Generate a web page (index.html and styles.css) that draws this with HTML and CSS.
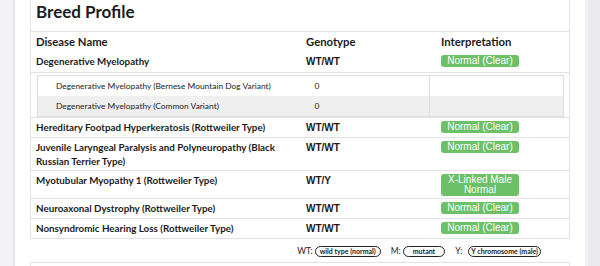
FILE: index.html
```html
<!DOCTYPE html>
<html lang="en">
<head>
    <meta charset="UTF-8" />
    <meta name="viewport" content="width=device-width, initial-scale=1" />
    <title>Breed Profile</title>
    <link rel="stylesheet" href="styles.css">
</head>
<body>
    <div class="rail rail-left"></div>

    <main class="page">
        <section class="card">
            <h1>Breed Profile</h1>
            <table class="results">
                <thead>
                    <tr>
                        <th class="col-name">Disease Name</th>
                        <th class="col-geno">Genotype</th>
                        <th class="col-interp">Interpretation</th>
                    </tr>
                </thead>
                <tbody>
                    <tr class="no-line">
                        <td class="name">Degenerative Myelopathy</td>
                        <td class="geno">WT/WT</td>
                        <td><span class="badge">Normal (Clear)</span></td>
                    </tr>
                    <tr class="variants">
                        <td colspan="3">
                            <table class="sub">
                                <tr>
                                    <td class="sub-name">Degenerative Myelopathy (Bernese Mountain Dog Variant)</td>
                                    <td class="sub-geno">0</td>
                                    <td class="sub-interp"></td>
                                </tr>
                                <tr class="alt">
                                    <td class="sub-name">Degenerative Myelopathy (Common Variant)</td>
                                    <td class="sub-geno">0</td>
                                    <td class="sub-interp"></td>
                                </tr>
                            </table>
                        </td>
                    </tr>
                    <tr>
                        <td class="name">Hereditary Footpad Hyperkeratosis (Rottweiler Type)</td>
                        <td class="geno">WT/WT</td>
                        <td><span class="badge">Normal (Clear)</span></td>
                    </tr>
                    <tr>
                        <td class="name">Juvenile Laryngeal Paralysis and Polyneuropathy (Black Russian Terrier Type)</td>
                        <td class="geno">WT/WT</td>
                        <td><span class="badge">Normal (Clear)</span></td>
                    </tr>
                    <tr>
                        <td class="name">Myotubular Myopathy 1 (Rottweiler Type)</td>
                        <td class="geno">WT/Y</td>
                        <td><span class="badge">X-Linked Male Normal</span></td>
                    </tr>
                    <tr>
                        <td class="name">Neuroaxonal Dystrophy (Rottweiler Type)</td>
                        <td class="geno">WT/WT</td>
                        <td><span class="badge">Normal (Clear)</span></td>
                    </tr>
                    <tr>
                        <td class="name">Nonsyndromic Hearing Loss (Rottweiler Type)</td>
                        <td class="geno">WT/WT</td>
                        <td><span class="badge">Normal (Clear)</span></td>
                    </tr>
                </tbody>
            </table>
        </section>

        <div class="legend">
            <span class="key">WT:</span><span class="pill">wild type (normal)</span>
            <span class="key">M:</span><span class="pill pill-wide">mutant</span>
            <span class="key">Y:</span><span class="pill pill-tight">Y chromosome (male)</span>
        </div>

        <section class="card card-next"></section>
    </main>

    <div class="rail rail-right"></div>
</body>
</html>
```

FILE: styles.css
```css
/* Breed profile results page */
* {
    box-sizing: border-box;
}
html, body {
    height: 100%;
}
body {
    margin: 0;
    display: flex;
    overflow: hidden;
    background: #fff;
    color: #1b1b1b;
    font-family: 'Lato', 'Noto Sans', sans-serif;
}
.rail {
    flex: none;
    width: 15px;
}
.rail-left {
    background: #f4f4f6;
    border-right: 2px solid #e6e6e9;
}
.rail-right {
    background: #eaeaef;
    border-left: 3px solid #f2f2f5;
}
.page {
    flex: 1;
    padding: 0 15px;
    display: flex;
    flex-direction: column;
}
.card {
    flex: none;
    border-left: 1px solid #e4e4e4;
    border-right: 1px solid #e4e4e4;
}
h1 {
    margin: 0;
    padding: 0 5px;
    height: 31px;
    font-size: 17px;
    line-height: 24px;
    font-weight: 700;
    color: #1c1c1c;
}

/* main results table */
.results {
    width: 100%;
    border-collapse: collapse;
    border-top: 1px solid #e2e2e2;
    table-layout: fixed;
}
.col-name { width: 270px; }
.col-geno { width: 135px; }
.results th {
    text-align: left;
    font-size: 11.3px;
    font-weight: 700;
    line-height: 15px;
    padding: 2px 5px 3px;
}
.results > tbody > tr > td {
    vertical-align: top;
    padding: 3px 5px 2px;
    line-height: 14px;
    border-bottom: 1px solid #e2e2e2;
}
.results > tbody > tr.no-line > td {
    padding-bottom: 3px;
}
.results > tbody > tr > td.name {
    font-size: 9.8px;
    font-weight: 700;
    line-height: 13.5px;
}
.geno {
    font-family: 'Liberation Sans', Arial, sans-serif;
    font-size: 10px;
    font-weight: 700;
}
.badge {
    display: block;
    width: 78px;
    padding: 0.5px 4px;
    border-radius: 3px;
    background: #6cc067;
    color: #fff;
    text-align: center;
    font-family: 'Liberation Sans', Arial, sans-serif;
    font-size: 10px;
    line-height: 10.5px;
}

/* nested variant rows */
.results > tbody > tr.variants > td {
    padding: 2px 5px 0 6px;
}
.sub {
    width: 100%;
    border-collapse: collapse;
    border: 1px solid #dedede;
    table-layout: fixed;
    font-size: 8.4px;
}
.sub td {
    height: 20px;
    padding: 0;
    line-height: 20px;
}
.sub-name {
    width: 268px;
    padding-left: 18px !important;
}
.sub-geno {
    width: 124px;
    padding-left: 9px !important;
}
.sub-interp {
    border-left: 1px solid #dedede;
}
.sub tr.alt td {
    background: #efefef;
}

/* genotype key */
.legend {
    flex: none;
    display: flex;
    align-items: center;
    justify-content: flex-end;
    height: 23px;
    padding: 1px 29px 0 0;
    font-size: 8.5px;
    color: #222;
}
.key {
    margin: 0 2px 0 10px;
}
.key:first-child {
    margin-left: 0;
}
.pill {
    display: inline-block;
    height: 11px;
    padding: 0 4px;
    border: 1px solid #222;
    border-radius: 6px;
    font-size: 7px;
    font-weight: 700;
    line-height: 9px;
}
.pill-wide {
    padding: 0 9px;
}
.pill-tight {
    margin-left: 4px;
    padding: 0 2px;
}
.card-next {
    flex: 1;
    border-top: 1px solid #e2e2e2;
}
```
